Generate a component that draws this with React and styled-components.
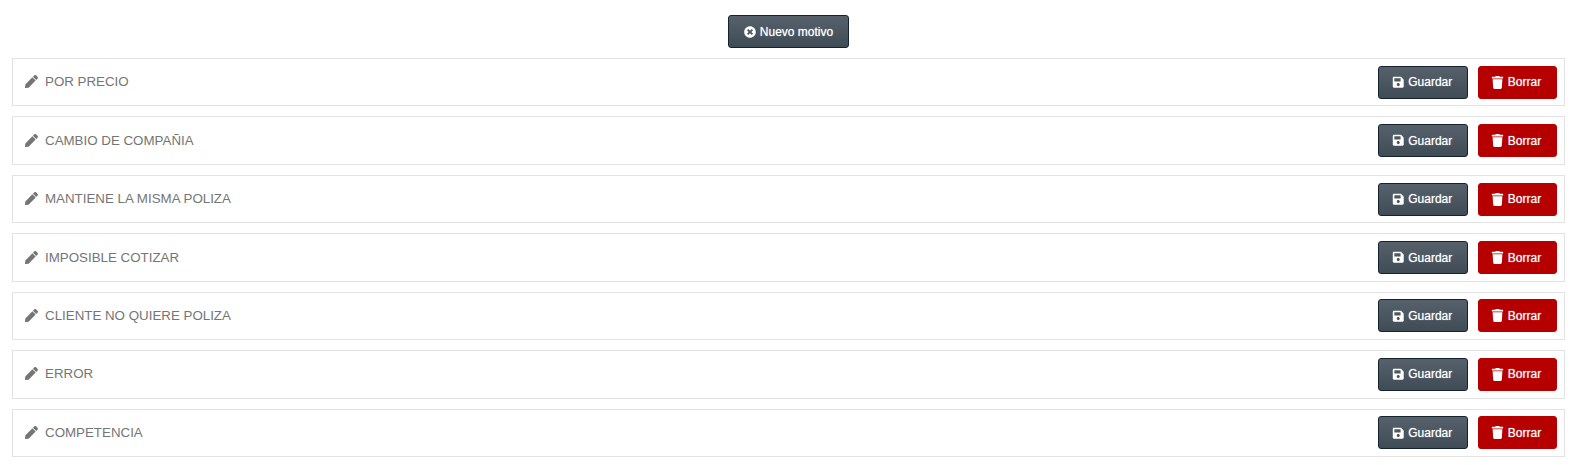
import React from "react";
import styled, { createGlobalStyle } from "styled-components";
import { FaPen, FaSave, FaTrash, FaTimesCircle } from "react-icons/fa";

const GlobalStyle = createGlobalStyle`
  html, body {
    margin: 0;
    padding: 0;
    background: #fff;
    font-family: "Liberation Sans", Arial, sans-serif;
  }
`;

const Page = styled.div`
  padding: 15px 12px 0;
`;

const TopBar = styled.div`
  display: flex;
  justify-content: center;
  margin-bottom: 10px;
`;

const Button = styled.button`
  display: inline-flex;
  align-items: center;
  justify-content: center;
  gap: 4px;
  box-sizing: border-box;
  height: 33px;
  width: ${(props) => props.width}px;
  padding: 0 ${(props) => props.$shift || 0}px 0 0;
  border-radius: 3px;
  color: #fff;
  font-family: "Liberation Sans", Arial, sans-serif;
  font-size: 12px;
  text-shadow: 0 0 1px rgba(255, 255, 255, 0.7);
  cursor: pointer;
  border: 1px solid ${(props) => (props.$danger ? "#b60000" : "#15232e")};
  background: ${(props) =>
    props.$danger ? "#b60000" : "linear-gradient(to bottom, #56616b, #3f4b55)"};
  svg {
    font-size: ${(props) => props.$icon || 12}px;
  }
`;

const Row = styled.div`
  display: flex;
  align-items: center;
  justify-content: space-between;
  box-sizing: border-box;
  height: 48.45px;
  margin-bottom: 10px;
  padding: 0 7px 0 12px;
  border: 1px solid #e2e2e2;
`;

const Label = styled.div`
  display: flex;
  align-items: center;
  gap: 7px;
  color: #757575;
  font-family: "Liberation Sans", Arial, sans-serif;
  font-size: 13.33px;
  line-height: 15px;
  margin-top: -1px;
  svg {
    font-size: 13px;
  }
`;

const Actions = styled.div`
  display: flex;
  gap: 10px;
`;

const motivos = [
  "POR PRECIO",
  "CAMBIO DE COMPAÑIA",
  "MANTIENE LA MISMA POLIZA",
  "IMPOSIBLE COTIZAR",
  "CLIENTE NO QUIERE POLIZA",
  "ERROR",
  "COMPETENCIA",
];

const App = () => {
  return (
    <Page>
      <GlobalStyle />
      <TopBar>
        <Button width={121}>
          <FaTimesCircle />
          Nuevo motivo
        </Button>
      </TopBar>
      {motivos.map((motivo) => (
        <Row key={motivo}>
          <Label>
            <FaPen />
            {motivo}
          </Label>
          <Actions>
            <Button width={90} $shift={2} $icon={12.5}>
              <FaSave />
              Guardar
            </Button>
            <Button width={79} $danger $shift={3} $icon={13}>
              <FaTrash />
              Borrar
            </Button>
          </Actions>
        </Row>
      ))}
    </Page>
  );
};

export default App;
